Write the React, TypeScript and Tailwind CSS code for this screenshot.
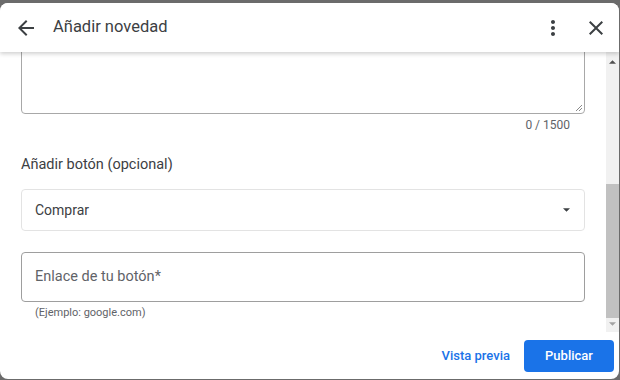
import React from "react";

const font = { fontFamily: "Roboto, 'Noto Sans', Arial, sans-serif" };

function Icon({ d, className }: { d: string; className?: string }) {
    return (
        <svg viewBox="0 0 24 24" className={className} fill="currentColor">
            <path d={d} />
        </svg>
    );
}

const ARROW_BACK = "M20 11H7.83l5.59-5.59L12 4l-8 8 8 8 1.41-1.41L7.83 13H20v-2z";
const MORE_VERT = "M12 8c1.1 0 2-.9 2-2s-.9-2-2-2-2 .9-2 2 .9 2 2 2zm0 2c-1.1 0-2 .9-2 2s.9 2 2 2 2-.9 2-2-.9-2-2-2zm0 6c-1.1 0-2 .9-2 2s.9 2 2 2 2-.9 2-2-.9-2-2-2z";
const CLOSE = "M19 6.41L17.59 5 12 10.59 6.41 5 5 6.41 10.59 12 5 17.59 6.41 19 12 13.41 17.59 19 19 17.59 13.41 12z";

export default function App() {
    return (
        <div className="w-[620px] h-[380px] bg-[#6b6b6b] pt-[3px] overflow-hidden" style={font}>
            {/* dialog */}
            <div className="w-[619px] h-[376px] bg-white rounded-lg overflow-hidden flex flex-col">
                {/* header */}
                <div className="relative z-10 h-[49px] shrink-0 flex items-center bg-white shadow-[0_2px_4px_rgba(0,0,0,0.18)]">
                    <button className="w-6 h-6 ml-[14px] text-[#3c4043]">
                        <Icon d={ARROW_BACK} className="w-6 h-6" />
                    </button>
                    <div className="ml-[15px] flex-1 text-[16.5px] text-[#3c4043]">Añadir novedad</div>
                    <button className="w-6 h-6 text-[#3c4043]">
                        <Icon d={MORE_VERT} className="w-6 h-6" />
                    </button>
                    <button className="w-6 h-6 ml-[19px] mr-[11px] text-[#3c4043]">
                        <Icon d={CLOSE} className="w-6 h-6" />
                    </button>
                </div>

                {/* scroll area */}
                <div className="h-[280px] shrink-0 flex">
                    <div className="flex-1 overflow-hidden">
                        <div className="-mt-[40px] pl-[21px] pr-[21px]">
                            <div className="h-[102px] border border-[#a8a8a8] rounded-[4px] relative">
                                <svg className="absolute right-[1px] bottom-[1px] w-[8px] h-[8px]" viewBox="0 0 8 8">
                                    <path d="M7 1L1 7M7 4L4 7" stroke="#8a8a8a" strokeWidth="1" />
                                </svg>
                            </div>
                            <div className="text-right text-[12px] text-[#5f6368] pr-[15px] mt-[3px] leading-[16px]">0 / 1500</div>

                            <div className="mt-[22px] text-[14.5px] text-[#3c4043] leading-[20px]">Añadir botón (opcional)</div>

                            <div className="mt-[14px] h-[42px] border border-[#e3e3e3] rounded-[4px] flex items-center pl-[13px] pr-[14px]">
                                <span className="flex-1 text-[14px] text-[#3c4043]">Comprar</span>
                                <svg viewBox="0 0 10 5" className="w-[7px] h-[4px]">
                                    <path d="M0 0h10L5 5z" fill="#3c4043" />
                                </svg>
                            </div>

                            <div className="mt-[21px] h-[50px] border border-[#9e9e9e] rounded-[4px] flex items-center pl-[13px]">
                                <span className="text-[14.5px] text-[#5f6368]">Enlace de tu botón*</span>
                            </div>
                            <div className="mt-[4px] pl-[14px] text-[11px] text-[#5f6368] leading-[14px]">(Ejemplo: google.com)</div>
                        </div>
                    </div>

                    {/* scrollbar */}
                    <div className="w-[13px] bg-[#f1f1f1] flex flex-col items-center">
                        <div className="h-[12px] flex items-end justify-center">
                            <svg viewBox="0 0 8 4" className="w-[7px] h-[4px]">
                                <path d="M0 4h8L4 0z" fill="#505050" />
                            </svg>
                        </div>
                        <div className="mt-[120px] w-full h-[134px] bg-[#c1c1c1]"></div>
                        <div className="h-[12px] flex items-center justify-center">
                            <svg viewBox="0 0 8 4" className="w-[7px] h-[4px]">
                                <path d="M0 0h8L4 4z" fill="#a3a3a3" />
                            </svg>
                        </div>
                    </div>
                </div>

                {/* footer */}
                <div className="flex-1 flex items-center justify-end pr-[5px] pt-[1px]">
                    <button className="text-[13px] font-medium text-[#1a73e8] mr-[14px]">Vista previa</button>
                    <button className="w-[90px] h-[32px] rounded-[4px] bg-[#1a73e8] text-white text-[13px] font-medium">
                        Publicar
                    </button>
                </div>
            </div>
        </div>
    );
}
